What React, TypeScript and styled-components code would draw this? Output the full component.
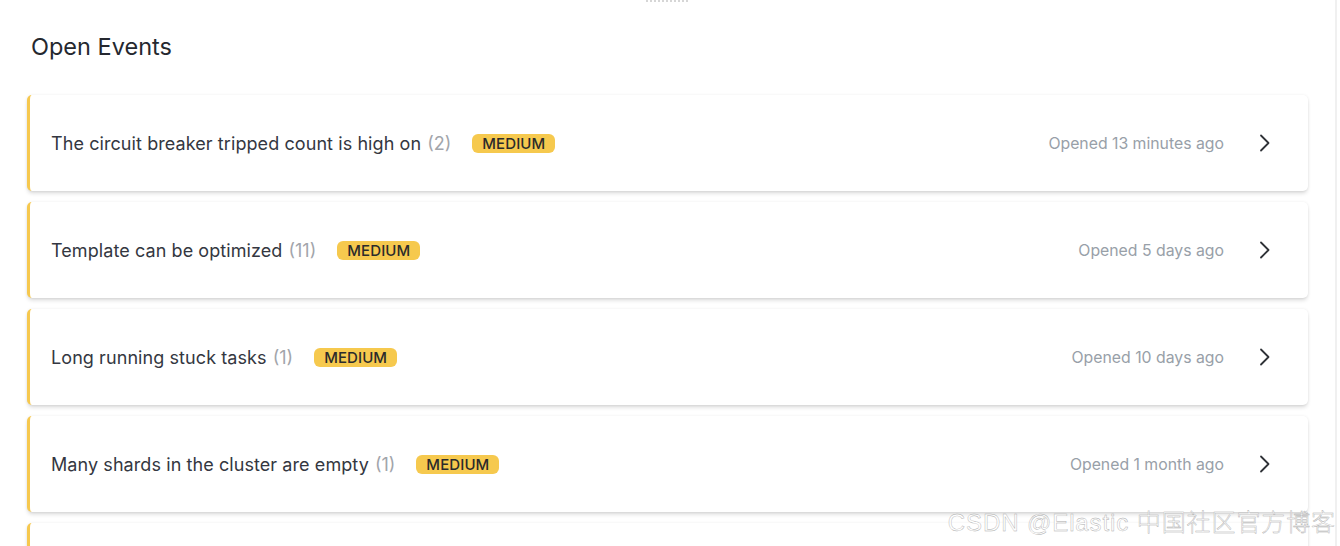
import React from "react";
import styled, { createGlobalStyle } from "styled-components";

const Global = createGlobalStyle`
  html, body { margin: 0; padding: 0; background: #ffffff; }
  body { font-family: Inter, "Noto Sans", sans-serif; -webkit-font-smoothing: antialiased; }
`;

const Page = styled.div`
  position: relative;
  width: 1340px;
  height: 546px;
  overflow: hidden;
  box-sizing: border-box;
  padding: 0 32px 0 27px;
`;

const ScrollEdge = styled.div`
  position: absolute;
  top: 0;
  right: 3px;
  width: 2px;
  height: 100%;
  background: #f0f0f0;
`;

const Handle = styled.div`
  position: absolute;
  top: 0;
  left: 646px;
  width: 42px;
  height: 2px;
  border-top: 2px dotted #d6d6d6;
`;

const Title = styled.h2`
  margin: 0;
  padding: 33px 0 0 4px;
  height: 62px;
  box-sizing: border-box;
  font-size: 23.5px;
  font-weight: 400;
  color: #25282f;
  line-height: 28px;
`;

const List = styled.div`
  display: flex;
  flex-direction: column;
  gap: 11px;
  margin-top: 33px;
`;

const Card = styled.div`
  display: flex;
  align-items: center;
  height: 96px;
  box-sizing: border-box;
  background: #fff;
  border-left: 3px solid #f6c84e;
  border-radius: 5px;
  box-shadow: 0 3px 4px -1px rgba(0, 0, 0, 0.16), 0 0 3px rgba(0, 0, 0, 0.07);
  padding: 0 36px 0 21px;
  flex-shrink: 0;
`;

const Name = styled.span`
  font-size: 18px;
  color: #343741;
  letter-spacing: 0.08px;
`;

const Count = styled.span`
  font-size: 18px;
  color: #a2a5ab;
  margin-left: 6px;
`;

const Badge = styled.span`
  margin-left: 21px;
  background: #f6c94e;
  color: #2b2b2b;
  font-size: 15px;
  font-weight: 500;
  line-height: 19px;
  height: 19px;
  padding: 0 10px;
  border-radius: 6px;
  letter-spacing: 0.1px;
`;

const Opened = styled.span`
  margin-left: auto;
  font-size: 15.8px;
  color: #98a0a8;
`;

const Chevron = styled.svg`
  margin-left: 34px;
  width: 14px;
  height: 18px;
`;

const events = [
  { name: "The circuit breaker tripped count is high on", count: 2, opened: "Opened 13 minutes ago" },
  { name: "Template can be optimized", count: 11, opened: "Opened 5 days ago" },
  { name: "Long running stuck tasks", count: 1, opened: "Opened 10 days ago" },
  { name: "Many shards in the cluster are empty", count: 1, opened: "Opened 1 month ago" },
  { name: "", count: null as number | null, opened: "" },
];

const Watermark = styled.div`
  position: absolute;
  right: 4px;
  bottom: 8px;
  font-family: "Liberation Sans", "Noto Sans CJK SC", sans-serif;
  font-size: 24px;
  font-weight: 300;
  color: #ffffff;
  -webkit-text-stroke: 0.4px #aaaaaa;
  letter-spacing: 0.9px;
`;

export default function App() {
  return (
    <Page>
      <Global />
      <Handle />
      <ScrollEdge />
      <Title>Open Events</Title>
      <List>
        {events.map((e, i) => (
          <Card key={i}>
            {e.name && (
              <>
                <Name>{e.name}</Name>
                <Count>({e.count})</Count>
                <Badge>MEDIUM</Badge>
                <Opened>{e.opened}</Opened>
                <Chevron viewBox="0 0 14 18">
                  <path d="M3 1.5 L10.5 9 L3 16.5" fill="none" stroke="#2f3237" strokeWidth="1.8" strokeLinecap="round" strokeLinejoin="round" />
                </Chevron>
              </>
            )}
          </Card>
        ))}
      </List>
      <Watermark>CSDN @Elastic 中国社区官方博客</Watermark>
    </Page>
  );
}
